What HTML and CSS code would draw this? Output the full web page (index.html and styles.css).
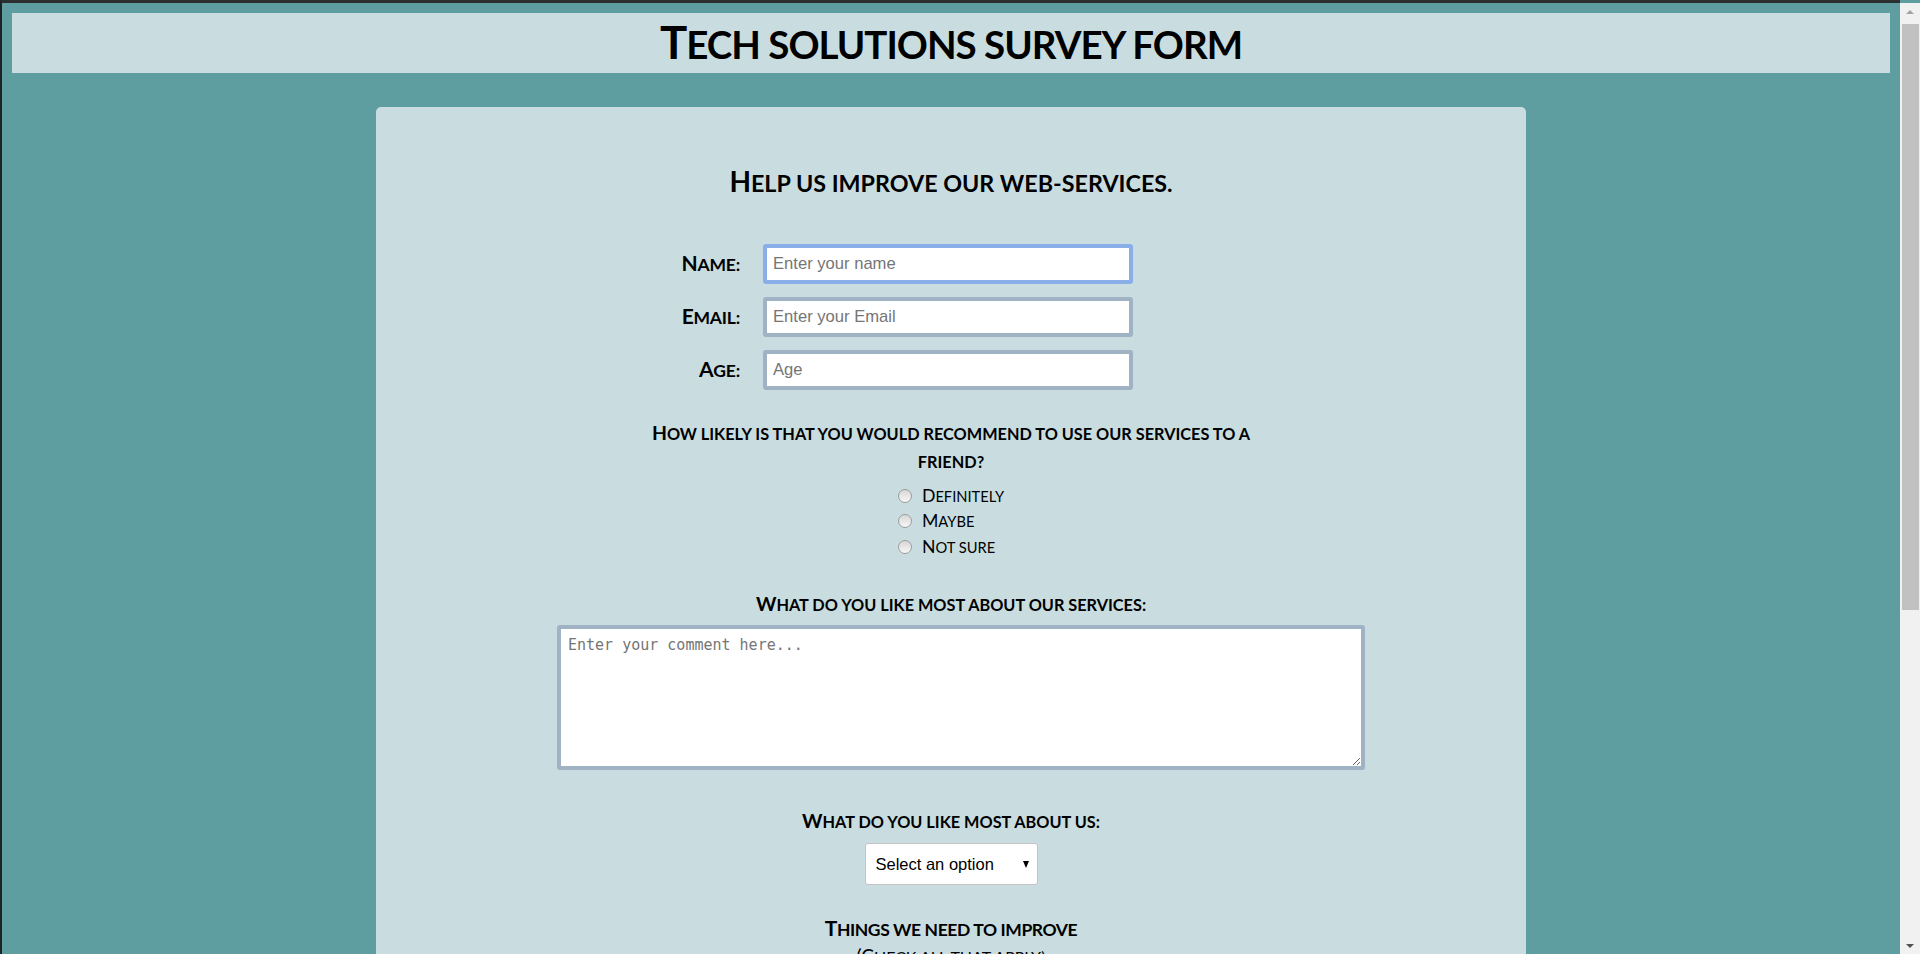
FILE: index.html
```html
<!DOCTYPE html>
<html lang="en">
<head>
<meta charset="utf-8">
<title>Tech solutions survey form</title>
<link rel="stylesheet" href="styles.css">
</head>
<body>
<header class="site-header">
  <h1 class="title" id="title">Tech solutions survey form</h1>
</header>
<main class="card">
  <form class="survey" id="survey-form">
    <h2 class="lead" id="description">Help us improve our web-services.</h2>

    <div class="fields">
      <div class="field">
        <label class="field-label" for="name">Name:</label>
        <input class="text-input is-focused" id="name" type="text" placeholder="Enter your name">
      </div>
      <div class="field">
        <label class="field-label" for="email">Email:</label>
        <input class="text-input" id="email" type="email" placeholder="Enter your Email">
      </div>
      <div class="field">
        <label class="field-label" for="number">Age:</label>
        <input class="text-input" id="number" type="number" placeholder="Age">
      </div>
    </div>

    <p class="question">How likely is that you would recommend to use our services to a<br>friend?</p>
    <div class="choice-wrap">
      <div class="choices">
        <label class="choice"><input class="radio" type="radio" name="recommend" value="definitely"><span class="choice-text">Definitely</span></label>
        <label class="choice"><input class="radio" type="radio" name="recommend" value="maybe"><span class="choice-text">Maybe</span></label>
        <label class="choice"><input class="radio" type="radio" name="recommend" value="not-sure"><span class="choice-text">Not sure</span></label>
      </div>
    </div>

    <p class="section-label first">What do you like most about our services:</p>
    <textarea class="comment" placeholder="Enter your comment here..."></textarea>

    <p class="section-label second">What do you like most about us:</p>
    <div class="select-wrap">
      <div class="select-box">
        <select class="dropdown" id="dropdown">
          <option>Select an option</option>
          <option>Customer support</option>
          <option>Fast delivery</option>
          <option>Pricing</option>
        </select>
      </div>
    </div>

    <p class="section-label third">Things we need to improve</p>
    <p class="sub-label">(Check all that apply)</p>
    <div class="choice-wrap">
      <div class="checks">
        <label class="choice"><input class="check" type="checkbox"><span class="choice-text">Front-end projects</span></label>
        <label class="choice"><input class="check" type="checkbox"><span class="choice-text">Back-end projects</span></label>
        <label class="choice"><input class="check" type="checkbox"><span class="choice-text">Data visualization</span></label>
        <label class="choice"><input class="check" type="checkbox"><span class="choice-text">Challenges</span></label>
        <label class="choice"><input class="check" type="checkbox"><span class="choice-text">Open source community</span></label>
        <label class="choice"><input class="check" type="checkbox"><span class="choice-text">Videos</span></label>
        <label class="choice"><input class="check" type="checkbox"><span class="choice-text">Forum</span></label>
      </div>
    </div>

    <p class="section-label fourth">Any comments or suggestions?</p>
    <textarea class="comment" placeholder="Enter your comment here..."></textarea>

    <div class="submit-wrap">
      <button class="submit" type="submit">Submit</button>
    </div>
  </form>
</main>

<div class="scrollbar" aria-hidden="true">
  <div class="scroll-arrow up"></div>
  <div class="scroll-track">
    <div class="scroll-thumb"></div>
  </div>
  <div class="scroll-arrow down"></div>
</div>
</body>
</html>
```

FILE: styles.css
```css
html {
  background: #5f9ea0;
}

body {
  margin: 0 20px 0 0;
  padding: 10px 10px 0 10px;
  border-top: 3px solid #2c2f2f;
  border-left: 2px solid #1b2424;
  background: #5f9ea0;
  font-family: Lato, "Open Sans", sans-serif;
  color: #000;
}

.site-header {
  background: #c9dde0;
  height: 60px;
  display: flex;
  align-items: center;
  justify-content: center;
}

.title {
  margin: 0;
  font-size: 38.5px;
  font-weight: 700;
  text-transform: uppercase;
  letter-spacing: -1px;
  line-height: 60px;
}

.title::first-letter {
  font-size: 45.5px;
}

.card {
  width: 1150px;
  margin: 34px auto 20px auto;
  background: #c9dde0;
  border-radius: 5px;
  padding: 57px 0 60px 0;
  box-sizing: border-box;
  text-align: center;
}

.survey {
  margin: 0;
}

.lead {
  margin: 0;
  font-size: 23.3px;
  line-height: 34px;
  font-weight: 700;
  text-transform: uppercase;
}

.lead::first-letter {
  font-size: 28px;
}

.fields {
  margin-top: 44px;
  display: flex;
  flex-direction: column;
  gap: 13px;
}

.field {
  display: flex;
  align-items: center;
}

.field-label {
  display: block;
  width: 364px;
  margin-right: 23px;
  text-align: right;
  font-size: 17.5px;
  font-weight: 700;
  text-transform: uppercase;
  letter-spacing: -0.2px;
  line-height: 26px;
}

.field-label::first-letter {
  font-size: 21px;
}

.text-input {
  width: 370px;
  height: 40px;
  box-sizing: border-box;
  border: 4px solid #a0b3c4;
  border-radius: 3px;
  padding: 0 6px;
  background: #fff;
  font-family: "Liberation Sans", Arial, sans-serif;
  font-size: 16.6px;
  color: #000;
  outline: none;
}

.text-input.is-focused {
  border-color: #8aaee8;
}

.text-input::placeholder {
  color: #757575;
}

.text-input::-webkit-outer-spin-button,
.text-input::-webkit-inner-spin-button {
  -webkit-appearance: none;
  margin: 0;
}

.question {
  margin: 29px 0 0 0;
  font-size: 16.3px;
  line-height: 28px;
  font-weight: 700;
  text-transform: uppercase;
}

.question::first-letter {
  font-size: 19.5px;
}

.choice-wrap {
  display: flex;
  justify-content: center;
}

.choices,
.checks {
  display: flex;
  flex-direction: column;
  align-items: flex-start;
  margin-top: 7px;
}

.choice {
  display: flex;
  align-items: center;
  height: 25.5px;
  text-align: left;
}

.radio,
.check {
  -webkit-appearance: none;
  appearance: none;
  width: 14px;
  height: 14px;
  margin: 0 10px 0 0;
  border: 1px solid #9c9c9c;
  background: linear-gradient(#d6d6d6, #f8f8f8);
  box-sizing: border-box;
  flex: none;
}

.radio {
  border-radius: 50%;
}

.check {
  border-radius: 2px;
}

.choice-text {
  display: inline-block;
  font-size: 14.7px;
  font-weight: 400;
  text-transform: uppercase;
  line-height: 25px;
}

.choice-text::first-letter {
  font-size: 17.7px;
}

.section-label {
  margin: 0;
  font-size: 16.3px;
  line-height: 24px;
  font-weight: 700;
  text-transform: uppercase;
}

.section-label::first-letter {
  font-size: 19.5px;
}

.section-label.first {
  margin-top: 32px;
}

.section-label.second {
  margin-top: 39.5px;
}

.section-label.third {
  margin-top: 30px;
  font-size: 17.5px;
  line-height: 26px;
  letter-spacing: -0.4px;
}

.section-label.third::first-letter {
  font-size: 21px;
}

.section-label.fourth {
  margin-top: 34px;
}

.sub-label {
  margin: 0;
  font-size: 16px;
  line-height: 26px;
  text-transform: uppercase;
}

.sub-label::first-letter {
  font-size: 19px;
}

.comment {
  display: block;
  width: 808px;
  height: 145px;
  margin: 8px 0 0 181px;
  box-sizing: border-box;
  border: 4px solid #a0b3c4;
  border-radius: 3px;
  padding: 7px 7px;
  background: #fff;
  font-family: "DejaVu Sans Mono", "Liberation Mono", monospace;
  font-size: 15px;
  outline: none;
}

.comment::placeholder {
  color: #757575;
}

.select-wrap {
  display: flex;
  justify-content: center;
  margin-top: 9px;
}

.select-box {
  position: relative;
  width: 173px;
  height: 42px;
}

.select-box::after {
  content: "";
  position: absolute;
  right: 9px;
  top: 18px;
  width: 0;
  height: 0;
  border-left: 3px solid transparent;
  border-right: 3px solid transparent;
  border-top: 7px solid #000;
  pointer-events: none;
}

.dropdown {
  -webkit-appearance: none;
  appearance: none;
  width: 100%;
  height: 100%;
  box-sizing: border-box;
  border: 1px solid #c4c4c4;
  border-radius: 3px;
  background: #fff;
  padding: 0 10px;
  font-family: "Liberation Sans", Arial, sans-serif;
  font-size: 16.5px;
  color: #000;
}

.submit-wrap {
  display: flex;
  justify-content: center;
  margin-top: 30px;
}

.submit {
  width: 160px;
  height: 44px;
  border: none;
  border-radius: 4px;
  background: #5f9ea0;
  color: #fff;
  font-family: Lato, sans-serif;
  font-size: 18px;
  font-weight: 700;
  text-transform: uppercase;
}

/* static rendering of the window scrollbar seen in the screenshot */
.scrollbar {
  position: fixed;
  top: 3px;
  right: 0;
  bottom: 0;
  width: 20px;
  background: #f1f1f1;
  display: flex;
  flex-direction: column;
}

.scroll-arrow {
  height: 17px;
  display: flex;
  align-items: center;
  justify-content: center;
  flex: none;
}

.scroll-arrow::before {
  content: "";
  width: 0;
  height: 0;
  border-left: 4px solid transparent;
  border-right: 4px solid transparent;
}

.scroll-arrow.up::before {
  border-bottom: 4px solid #a3a3a3;
}

.scroll-arrow.down::before {
  border-top: 4px solid #505050;
}

.scroll-track {
  flex: 1;
  padding: 4px 1px 0 2px;
}

.scroll-thumb {
  height: 586px;
  background: #c1c1c1;
}
```
